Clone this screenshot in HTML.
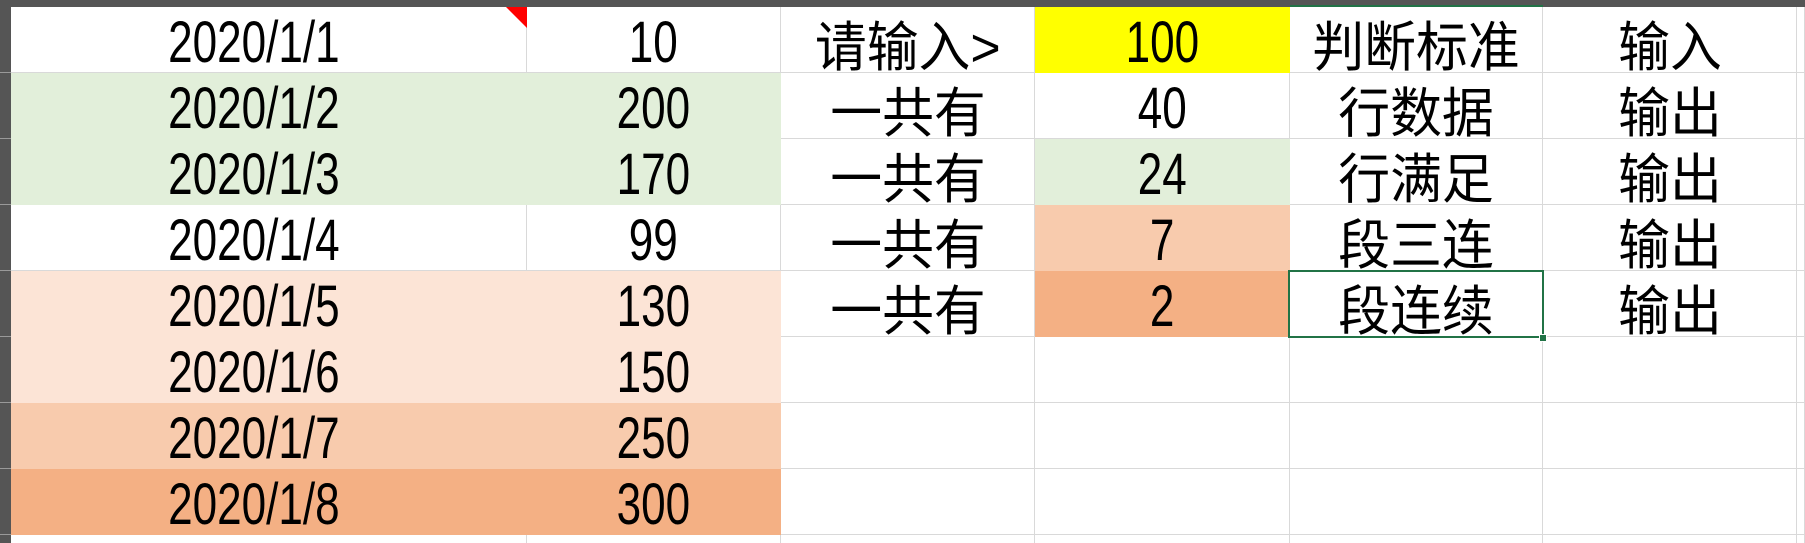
<!DOCTYPE html>
<html><head><meta charset="utf-8"><style>
html,body{margin:0;width:1805px;height:543px;overflow:hidden;}
body{background:#fff;position:relative;font-family:"Liberation Sans","Noto Sans CJK SC",sans-serif;}
.c{position:absolute;height:66px;box-sizing:border-box;border-right:1px solid #d9d9d9;border-bottom:1px solid #d9d9d9;display:flex;align-items:center;justify-content:center;color:#000;padding-top:6px;overflow:hidden;}
.c span{display:inline-block;white-space:nowrap;}
.d{font-size:58px;transform:scaleX(0.76);}
.dt{margin-right:30px;}
.k{font-size:54px;transform:scaleX(0.96);}
</style></head><body>
<div id="g"></div>
<script>
var rows=[
['2020/1/1','#fff','10','#fff','请输入>','#fff','100','#ffff00','判断标准','输入'],
['2020/1/2','#e2efda','200','#e2efda','一共有','#fff','40','#fff','行数据','输出'],
['2020/1/3','#e2efda','170','#e2efda','一共有','#fff','24','#e2efda','行满足','输出'],
['2020/1/4','#fff','99','#fff','一共有','#fff','7','#f8cbad','段三连','输出'],
['2020/1/5','#fce4d6','130','#fce4d6','一共有','#fff','2','#f4b084','段连续','输出'],
['2020/1/6','#fce4d6','150','#fce4d6','','#fff','','#fff','',''],
['2020/1/7','#f8cbad','250','#f8cbad','','#fff','','#fff','',''],
['2020/1/8','#f4b084','300','#f4b084','','#fff','','#fff','',''],
['','#fff','','#fff','','#fff','','#fff','','']];
var xs=[11,527,781,1035,1290,1543,1797,1805];
var h='';
for(var r=0;r<rows.length;r++){
 var R=rows[r],y=7+66*r,hh=(r==8?9:66);
 var cells=[[R[0],R[1]],[R[2],R[3]],[R[4],R[5]],[R[6],R[7]],[R[8],'#fff'],[R[9],'#fff'],['','#fff']];
 for(var c=0;c<7;c++){
  var bg=cells[c][1],t=cells[c][0];
  var st='left:'+xs[c]+'px;top:'+y+'px;height:'+hh+'px;width:'+(xs[c+1]-xs[c])+'px;background:'+bg+';';
  if(bg!='#fff'){st+='border-color:'+bg+';';}
  if(r==8){st+='border-bottom:none;';}
  var cls=/^[0-9\/]+$/.test(t)?'d':'k';
  if(c==0)cls+=' dt';
  h+='<div class="c" style="'+st+'"><span class="'+cls+'">'+t+'</span></div>';
 }
}
document.getElementById('g').outerHTML=h;
</script>
<div style="position:absolute;left:0;top:0;width:1805px;height:7px;background:#555"></div>
<div style="position:absolute;left:1290px;top:5px;width:253px;height:2px;background:#217346"></div>
<div style="position:absolute;left:0;top:0;width:11px;height:543px;background:#555"></div>
<div style="position:absolute;left:0;top:72px;width:11px;height:1px;background:#999"></div>
<div style="position:absolute;left:0;top:138px;width:11px;height:1px;background:#999"></div>
<div style="position:absolute;left:0;top:204px;width:11px;height:1px;background:#999"></div>
<div style="position:absolute;left:0;top:270px;width:11px;height:1px;background:#999"></div>
<div style="position:absolute;left:0;top:336px;width:11px;height:1px;background:#999"></div>
<div style="position:absolute;left:0;top:402px;width:11px;height:1px;background:#999"></div>
<div style="position:absolute;left:0;top:468px;width:11px;height:1px;background:#999"></div>
<div style="position:absolute;left:0;top:534px;width:11px;height:1px;background:#999"></div>
<div style="position:absolute;left:506px;top:7px;width:0;height:0;border-top:21px solid #f00;border-left:21px solid transparent"></div>
<div style="position:absolute;left:1288px;top:270px;width:256px;height:68px;box-sizing:border-box;border:2px solid #217346"></div>
<div style="position:absolute;left:1539px;top:334px;width:6px;height:6px;background:#217346;border:1px solid #fff"></div>
</body></html>
